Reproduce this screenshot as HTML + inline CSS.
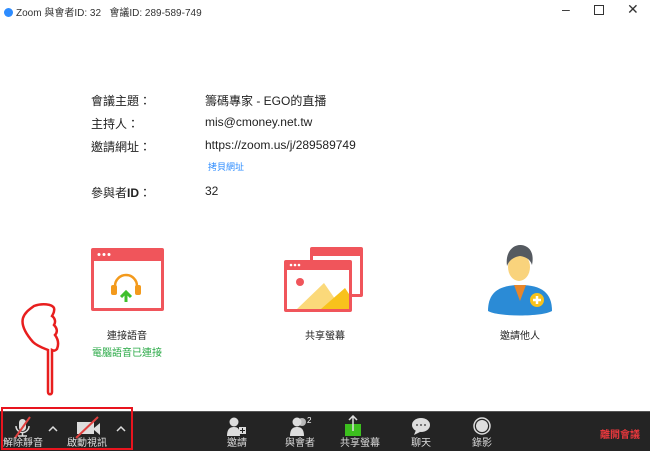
<!DOCTYPE html>
<html><head><meta charset="utf-8"><style>
body{margin:0;width:650px;height:450px;background:#fff;position:relative;overflow:hidden;font-family:"Liberation Sans","Noto Sans CJK TC",sans-serif;color:#222}
.a{position:absolute;white-space:nowrap}
.lb{font-size:12px;color:#222}
.tb{position:absolute;left:0;top:411px;width:650px;height:39px;background:#242424;border-top:1px solid #555}
.tl{position:absolute;top:26px;font-size:10px;line-height:12px;color:#ddd;transform:translateX(-50%)}
</style></head><body>
<div class="a" style="left:4px;top:4px;font-size:10px;color:#333"><span style="display:inline-block;width:9px;height:9px;border-radius:50%;background:#2d8cff;vertical-align:-1px;margin-right:3px"></span>Zoom 與會者ID: 32 &nbsp; 會議ID: 289-589-749</div>
<div class="a" style="left:562px;top:1px;font-size:14px;color:#333">–</div>
<div class="a" style="left:594px;top:5px;width:8px;height:8px;border:1px solid #333"></div>
<div class="a" style="left:627px;top:1px;font-size:14px;color:#333">✕</div>

<div class="a lb" style="left:91px;top:92px">會議主題：</div><div class="a lb" style="left:205px;top:92px">籌碼專家 - EGO的直播</div>
<div class="a lb" style="left:91px;top:115px">主持人：</div><div class="a lb" style="left:205px;top:115px">mis@cmoney.net.tw</div>
<div class="a lb" style="left:91px;top:138px">邀請網址：</div><div class="a lb" style="left:205px;top:138px">https://zoom.us/j/289589749</div>
<div class="a" style="left:208px;top:160px;font-size:9px;color:#2d8cff">拷貝網址</div>
<div class="a lb" style="left:91px;top:184px">參與者<b>ID</b>：</div><div class="a lb" style="left:205px;top:184px">32</div>

<svg class="a" style="left:0;top:0" width="650" height="450">
<rect x="91" y="248" width="73" height="63" rx="2" fill="#f0555b"/>
<rect x="94" y="261" width="67" height="47" fill="#fff"/>
<circle cx="99" cy="254.5" r="1.5" fill="#fff"/><circle cx="104" cy="254.5" r="1.5" fill="#fff"/><circle cx="109" cy="254.5" r="1.5" fill="#fff"/>
<path d="M115 292v-6a11 11 0 0 1 22 0v6" fill="none" stroke="#f39a1c" stroke-width="2.5"/>
<rect x="111" y="285" width="6" height="10" rx="2" fill="#f39a1c"/><rect x="135" y="285" width="6" height="10" rx="2" fill="#f39a1c"/>
<path d="M126 302v-9M121 297l5-5 5 5" stroke="#3fbf2c" stroke-width="3" fill="none"/>
<rect x="310" y="247" width="53" height="50" rx="2" fill="#f0555b"/>
<rect x="313" y="256" width="47" height="38" fill="#fff"/>
<rect x="284" y="260" width="68" height="52" rx="2" fill="#f0555b"/>
<rect x="287" y="270" width="62" height="39" fill="#fff"/>
<circle cx="291" cy="265" r="1.3" fill="#fff"/><circle cx="295" cy="265" r="1.3" fill="#fff"/><circle cx="299" cy="265" r="1.3" fill="#fff"/>
<circle cx="300" cy="282" r="4" fill="#f0555b"/>
<path d="M297 309l27-26 18 26z" fill="#fbd97a"/><path d="M321 309l24-21 4 6v15z" fill="#f8c21c"/>
<path d="M488 311c0-18 10-26 32-26s32 8 32 26c-10 6-54 6-64 0z" fill="#2b8bd6"/>
<path d="M514 285l6 16 6-16z" fill="#e8862a"/>
<ellipse cx="519" cy="267" rx="11" ry="14" fill="#f9d37c"/>
<path d="M507 266c-2-14 6-21 13-21s15 5 12 20c-2-6-6-8-12-9-6 1-11 4-13 10z" fill="#555a60"/>
<circle cx="537" cy="300" r="7" fill="#f8c21c"/><path d="M537 296v8M533 300h8" stroke="#fff" stroke-width="2.5"/>
<path d="M34 306c8-3 18-2 20 2 1 4-1 6-2 8 3 2 4 6 2 9 3 3 4 7 1 10 3 4 4 9 2 14-2 2-3 2-5 1l0 42c0 3-4 3-4 0l0-42c-5-2-11-4-15-8-7-8-12-17-10-24 2-6 7-9 11-12z" fill="none" stroke="#e81e1e" stroke-width="2.5"/>
</svg>
<div class="a" style="left:127px;top:327px;font-size:10px;transform:translateX(-50%)">連接語音</div>
<div class="a" style="left:127px;top:344px;font-size:10px;color:#27a844;transform:translateX(-50%)">電腦語音已連接</div>
<div class="a" style="left:325px;top:327px;font-size:10px;transform:translateX(-50%)">共享螢幕</div>
<div class="a" style="left:520px;top:327px;font-size:10px;transform:translateX(-50%)">邀請他人</div>

<div class="tb">
<svg class="a" style="left:0;top:3px" width="650" height="36">
<rect x="19" y="4" width="7" height="12" rx="3.5" fill="#ddd"/><path d="M16 11a6.5 6.5 0 0 0 13 0M22.5 18v3M18 21h9" stroke="#ddd" fill="none" stroke-width="1.5"/>
<path d="M15 23L30 2" stroke="#e0403f" stroke-width="2"/>
<path d="M49 16l4-4 4 4M117 16l4-4 4 4" stroke="#ddd" stroke-width="1.5" fill="none"/>
<rect x="77" y="7" width="17" height="12" fill="#ddd"/><path d="M94 13l6-5v12l-6-5z" fill="#ddd"/><path d="M76 23L98 2" stroke="#e0403f" stroke-width="2"/>
<circle cx="234" cy="7" r="4.5" fill="#ddd"/><path d="M227 21c0-7 3-9 7-9s6 2 6 9z" fill="#ddd"/><rect x="239" y="12" width="7" height="7" fill="#ddd"/><path d="M242.5 13v5M240 15.5h5" stroke="#242424"/>
<circle cx="297" cy="7" r="4.5" fill="#ddd"/><path d="M290 21c0-7 3-9 7-9s7 2 7 9z" fill="#ddd"/><circle cx="302" cy="7" r="4" fill="#ddd" opacity=".8"/><text x="307" y="8" font-size="8" fill="#fff" font-family="Liberation Sans">2</text>
<rect x="345" y="9" width="16" height="12" fill="#3cbf1e"/><path d="M353 16V1M349 5l4-4 4 4" stroke="#ddd" stroke-width="1.5" fill="none"/>
<ellipse cx="421" cy="10" rx="9" ry="7" fill="#ddd"/><path d="M416 15l-2 5 6-3z" fill="#ddd"/><circle cx="417" cy="10" r="1" fill="#555"/><circle cx="421" cy="10" r="1" fill="#555"/><circle cx="425" cy="10" r="1" fill="#555"/>
<circle cx="482" cy="11" r="8" fill="none" stroke="#ddd" stroke-width="1.5"/><circle cx="482" cy="11" r="6" fill="#ddd"/>
</svg>
<div class="tl" style="left:23px">解除靜音</div><div class="tl" style="left:87px">啟動視訊</div>
<div class="tl" style="left:237px">邀請</div><div class="tl" style="left:300px">與會者</div><div class="tl" style="left:360px">共享螢幕</div>
<div class="tl" style="left:421px">聊天</div><div class="tl" style="left:482px">錄影</div>
<div class="a" style="left:600px;top:14px;font-size:10px;color:#e8383d;font-weight:bold">離開會議</div>
</div>
<div class="a" style="left:1px;top:407px;width:128px;height:39px;border:2.5px solid #e8141e"></div>
</body></html>
